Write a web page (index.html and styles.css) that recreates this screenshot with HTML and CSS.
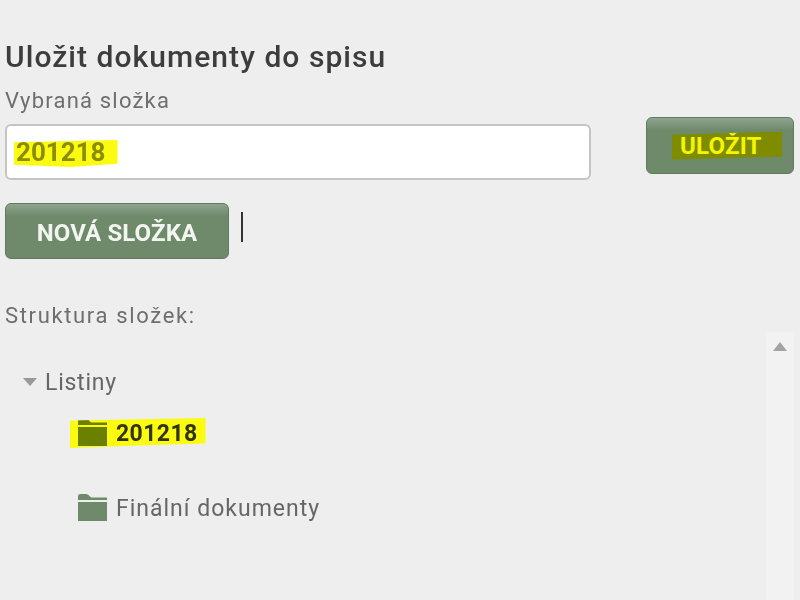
FILE: index.html
```html
<!DOCTYPE html>
<html lang="cs">
  <head>
    <meta charset="UTF-8" />
    <meta name="viewport" content="width=device-width, initial-scale=1.0" />
    <title>Uložit dokumenty do spisu</title>
    <link rel="stylesheet" href="styles.css">
  </head>
  <body>
    <div class="page">
      <h1 class="title">Uložit dokumenty do spisu</h1>
      <div class="top">
        <div class="form">
          <p class="label">Vybraná složka</p>
          <div class="field"><span class="mark mark-field">201218</span></div>
          <div class="actions">
            <button class="btn btn-new">NOVÁ SLOŽKA</button>
            <span class="caret"></span>
          </div>
        </div>
        <button class="btn btn-save"><span class="mark-save">ULOŽIT</span></button>
      </div>

      <p class="label label-tree">Struktura složek:</p>

      <!-- Tree -->
      <div class="tree-area">
        <div class="tree">
          <div class="root">
            <svg class="arrow" viewBox="0 0 14 8"><path d="M0 0h14L7 8z" /></svg>
            <span>Listiny</span>
          </div>
          <div class="node node-active">
            <span class="mark mark-node">
              <svg class="folder" viewBox="0 0 29 29"><path d="M0 6V2.500Q0 0 2.500 0H8Q10.500 0 12 2.500L13 3.500H29V6zM0 8H29V27H0z" /></svg>
              <b>201218</b>
            </span>
          </div>
          <div class="node">
            <svg class="folder" viewBox="0 0 29 29"><path d="M0 6V2.500Q0 0 2.500 0H8Q10.500 0 12 2.500L13 3.500H29V6zM0 8H29V27H0z" /></svg>
            <span>Finální dokumenty</span>
          </div>
        </div>
        <div class="scrollbar">
          <svg class="scroll-up" viewBox="0 0 14 9"><path d="M7 0l7 9H0z" /></svg>
        </div>
      </div>
    </div>
  </body>
</html>
```

FILE: styles.css
```css
* {
  box-sizing: border-box;
}
body {
  margin: 0;
  background-color: #eeeeee;
  font-family: Roboto, "Liberation Sans", sans-serif;
  color: #666666;
}
.page {
  height: 600px;
  overflow: hidden;
  padding: 39px 6px 0 5px;
  filter: blur(0.4px);
}
.title {
  margin: 0 0 13px;
  font-size: 30px;
  line-height: 36px;
  font-weight: 500;
  letter-spacing: 1.05px;
  color: #3d3d3d;
}
.top {
  display: flex;
  justify-content: space-between;
  align-items: flex-start;
}
.form {
  width: 586px;
}
.label {
  margin: 0;
  font-size: 22px;
  line-height: 26px;
  letter-spacing: 1.2px;
  color: #6e6e6e;
}
.field {
  margin-top: 10px;
  height: 56px;
  padding: 14px 0 0 7px;
  background-color: #ffffff;
  border: 2px solid #c4c4c4;
  border-radius: 6px;
}
.mark {
  display: inline-flex;
  align-items: center;
  background-color: #fbfb12;
}
.mark-field {
  height: 27px;
  padding: 0 12px 4px 2px;
  font-size: 26px;
  font-weight: 700;
  color: #8c8c00;
  clip-path: polygon(0 8%, 100% 0, 100% 88%, 55% 100%, 0 92%);
}
.actions {
  display: flex;
  align-items: flex-start;
  gap: 12px;
  margin-top: 23px;
}
.btn {
  display: flex;
  align-items: center;
  justify-content: center;
  padding: 0;
  border: 1px solid #5f7a5f;
  border-radius: 6px;
  background: linear-gradient(#8fa58f, #6f8a6b 22%, #6f8a6b);
  font-family: inherit;
  font-weight: 700;
}
.btn-new {
  width: 224px;
  height: 56px;
  padding-top: 3px;
  font-size: 24px;
  letter-spacing: 0.1px;
  color: #f2f5f0;
}
.caret {
  width: 2px;
  height: 30px;
  margin-top: 9px;
  background-color: #333333;
}
.btn-save {
  width: 148px;
  height: 57px;
  margin-top: 29px;
  font-size: 24px;
  letter-spacing: 0.2px;
  color: #f5f500;
}
.mark-save {
  width: 110px;
  height: 28px;
  margin-left: 14px;
  padding-left: 8px;
  line-height: 28px;
  text-align: left;
  background-color: #7f8c00;
  clip-path: polygon(0 12%, 100% 0, 100% 90%, 0 100%);
}
.label-tree {
  margin-top: 44px;
  letter-spacing: 1.65px;
}
.tree-area {
  display: flex;
  justify-content: space-between;
  margin-top: 3px;
}
.tree {
  padding: 36px 0 0 18px;
}
.root {
  display: flex;
  align-items: center;
  gap: 8px;
  height: 28px;
  font-size: 23px;
  letter-spacing: 0.75px;
}
.arrow {
  width: 14px;
  height: 8px;
  fill: #999999;
}
.node {
  display: flex;
  align-items: center;
  gap: 9px;
  height: 36px;
  margin: 18px 0 0 55px;
  font-size: 23px;
  letter-spacing: 1px;
}
.node-active {
  margin: 19px 0 0 47px;
  letter-spacing: 0.4px;
}
.mark-node {
  height: 30px;
  gap: 9px;
  padding: 0 8px;
  color: #333300;
  clip-path: polygon(0 8%, 100% 0, 100% 85%, 50% 92%, 0 100%);
}
.mark-node b {
  font-weight: 700;
}
.node-active + .node {
  margin-top: 39px;
}
.folder {
  width: 29px;
  height: 29px;
  fill: #6f8a6b;
}
.mark-node .folder {
  fill: #6b8000;
}
.scrollbar {
  display: flex;
  justify-content: center;
  width: 28px;
  height: 270px;
  padding-top: 10px;
  background-color: #f2f2f2;
}
.scroll-up {
  width: 14px;
  height: 9px;
  fill: #a3a3a3;
}
```
